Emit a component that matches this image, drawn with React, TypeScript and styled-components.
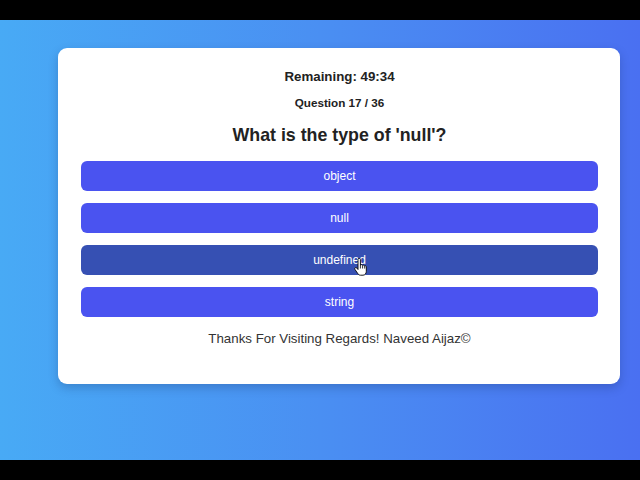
import { createGlobalStyle } from 'styled-components';
import styled from 'styled-components';

const GlobalStyle = createGlobalStyle`
  html, body {
    margin: 0;
    padding: 0;
    background: #000;
  }
  body {
    font-family: "Liberation Sans", Arial, sans-serif;
  }
`;

const options = ['object', 'null', 'undefined', 'string'];
const hovered = 2;

const Screen = styled.div`
  width: 640px;
  height: 480px;
  display: flex;
  flex-direction: column;
  background: #000;
`;

const Letterbox = styled.div`
  height: 20px;
  background: #000;
`;

const Stage = styled.div`
  height: 440px;
  background: linear-gradient(90deg, #48aaf5 0%, #4a8ff2 50%, #4a70f1 100%);
  padding: 28px 20px 0 58px;
  box-sizing: border-box;
`;

const Card = styled.div`
  background: #fff;
  border-radius: 9px;
  box-shadow: 0 4px 10px rgba(20, 40, 90, 0.25);
  padding: 21px 22px 37px 23px;
  display: flex;
  flex-direction: column;
  align-items: stretch;
  text-align: center;
  color: #222;
`;

const Timer = styled.div`
  font-size: 13.3px;
  line-height: 16px;
  font-weight: bold;
`;

const Counter = styled.div`
  font-size: 11.7px;
  line-height: 14px;
  font-weight: bold;
  margin-top: 11px;
`;

const Question = styled.h2`
  font-size: 17.8px;
  line-height: 22px;
  font-weight: bold;
  margin: 14px 0 0;
`;

const Options = styled.div`
  display: flex;
  flex-direction: column;
  gap: 12px;
  margin-top: 15px;
`;

const OptionButton = styled.button<{ $hover?: boolean }>`
  position: relative;
  height: 30px;
  border: none;
  border-radius: 6px;
  background: ${(p) => (p.$hover ? '#3650b3' : '#4a53f0')};
  color: #fff;
  font-family: "Liberation Sans", Arial, sans-serif;
  font-size: 12px;
  cursor: pointer;
`;

const Cursor = styled.svg`
  position: absolute;
  left: 273px;
  top: 13px;
`;

const Footer = styled.p`
  font-size: 13.3px;
  line-height: 16px;
  color: #333;
  margin: 14px 0 0;
`;

const HandCursor = () => (
  <Cursor width="14" height="18" viewBox="0 0 14 18">
    <path
      d="M4 1.5c0-.8.6-1.3 1.2-1.3S6.4.7 6.4 1.5V7l.3-.1c.5-.4 1.6-.3 1.9.4.5-.4 1.6-.3 1.9.5.6-.3 1.8 0 1.8 1v4.6c0 2-1.3 3.8-3.3 3.8H6.5c-1.2 0-2-.6-2.7-1.6L1 11.5c-.5-.7-.3-1.5.3-1.8.6-.3 1.3 0 1.7.5l1 1.3z"
      fill="#fff"
      stroke="#000"
      strokeWidth="0.9"
      strokeLinejoin="round"
    />
    <path d="M6.4 7v3.5M8.6 7.4v3.1M10.7 8v2.6" stroke="#000" strokeWidth="0.8" />
  </Cursor>
);

export default function App() {
  return (
    <Screen>
      <GlobalStyle />
      <Letterbox />
      <Stage>
        <Card>
          <Timer>Remaining: 49:34</Timer>
          <Counter>Question 17 / 36</Counter>
          <Question>What is the type of 'null'?</Question>
          <Options>
            {options.map((opt, i) => (
              <OptionButton key={opt} $hover={i === hovered}>
                {opt}
                {i === hovered && <HandCursor />}
              </OptionButton>
            ))}
          </Options>
          <Footer>Thanks For Visiting Regards! Naveed Aijaz©</Footer>
        </Card>
      </Stage>
      <Letterbox />
    </Screen>
  );
}
